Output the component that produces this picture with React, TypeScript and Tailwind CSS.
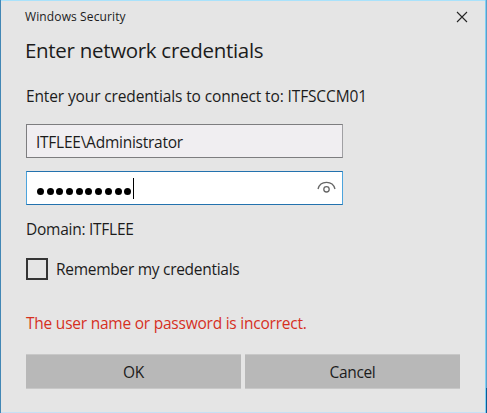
import { useState } from 'react';

const PASSWORD_LENGTH = 10;

export default function App() {
  const [remember, setRemember] = useState(false);

  return (
    <div className="flex h-[413px] w-[487px] overflow-hidden bg-[#e5e5e5] font-['Open_Sans',sans-serif] text-[#1c1c1c]">
      <div className="w-px shrink-0 bg-[#4287b5]" />
      <div className="flex min-w-0 flex-1 flex-col border-t border-b border-t-[#a9e2fb] border-b-[#c6e0f5]">
        <TitleBar />
        <main className="flex flex-col pl-[25px] whitespace-nowrap">
          <h1 className="-ml-px mt-1 h-7 text-[20.5px] leading-7 tracking-[-0.3px]">
            Enter network credentials
          </h1>
          <p className="mt-[22px] h-5 text-[15.5px] leading-5 tracking-[-0.13px]">
            Enter your credentials to connect to: ITFSCCM01
          </p>

          <div className="mt-[18px] flex h-[34px] w-[317px] items-center border border-[#7d7d7f] border-r-[#a0a0a3] bg-[#f0eef1] pt-[3px] pl-[9px] text-[15.5px] tracking-[-0.25px]">
            ITFLEE\Administrator
          </div>
          <PasswordField />

          <p className="mt-[14px] h-5 text-[15.5px] leading-5 tracking-[-0.26px]">Domain: ITFLEE</p>

          <button
            type="button"
            role="checkbox"
            aria-checked={remember}
            onClick={() => setRemember(!remember)}
            className="mt-[19px] flex h-[22px] items-center gap-2 text-[15.5px] leading-5 tracking-[-0.28px]"
          >
            <span className="flex size-[22px] items-center justify-center border-2 border-[#353535]">
              {remember && <span className="size-3 bg-[#353535]" />}
            </span>
            Remember my credentials
          </button>

          <p className="mt-[33px] h-5 text-[15.5px] leading-5 tracking-[-0.23px] text-[#d6301f]">
            The user name or password is incorrect.
          </p>

          <div className="mt-[21px] flex gap-1 text-[15.5px] tracking-[-0.35px]">
            <DialogButton label="OK" />
            <DialogButton label="Cancel" />
          </div>
        </main>
      </div>
      <div className="w-px shrink-0 bg-[#7fd0f5]" />
      <div className="flex w-px shrink-0 flex-col">
        <div className="h-[388px] bg-[#5b9fca]" />
        <div className="flex-1 bg-[#0b5a94]" />
      </div>
    </div>
  );
}

function TitleBar() {
  return (
    <header className="flex h-[31px] items-center justify-between pr-[17px] pl-6">
      <span className="text-[12px] tracking-[0.12px]">Windows Security</span>
      <svg width="12" height="12" viewBox="0 0 12 12" fill="none" stroke="#252525" strokeWidth="1.1">
        <path d="M1 1l10 10M11 1L1 11" />
      </svg>
    </header>
  );
}

function PasswordField() {
  return (
    <div className="mt-[13px] flex h-[34px] w-[317px] items-center border border-[#2372ae] border-r-[#4ca4dd] border-l-[#4ca4dd] bg-white pr-[6px] pl-[10px]">
      <div className="flex gap-[2.7px]">
        {Array.from({ length: PASSWORD_LENGTH }, (_, i) => (
          <span key={i} className="mt-[6px] size-[7px] rounded-full bg-black" />
        ))}
      </div>
      <span className="ml-[1.5px] h-[21px] w-px bg-black" />
      <svg
        className="ml-auto"
        width="19"
        height="14"
        viewBox="0 0 19 14"
        fill="none"
        stroke="#666"
        strokeWidth="1.3"
      >
        <path d="M1 8C2 4 5.2 1.4 9.5 1.4S17 4 18 8" />
        <circle cx="9.5" cy="8.3" r="2.7" />
      </svg>
    </div>
  );
}

function DialogButton({ label }: { label: string }) {
  return (
    <button
      type="button"
      className="h-[35px] w-[215px] border-t border-b border-t-[#c8c8c8] border-b-[#c8c8c8] bg-[#b8b8b8] pt-[3px]"
    >
      {label}
    </button>
  );
}
